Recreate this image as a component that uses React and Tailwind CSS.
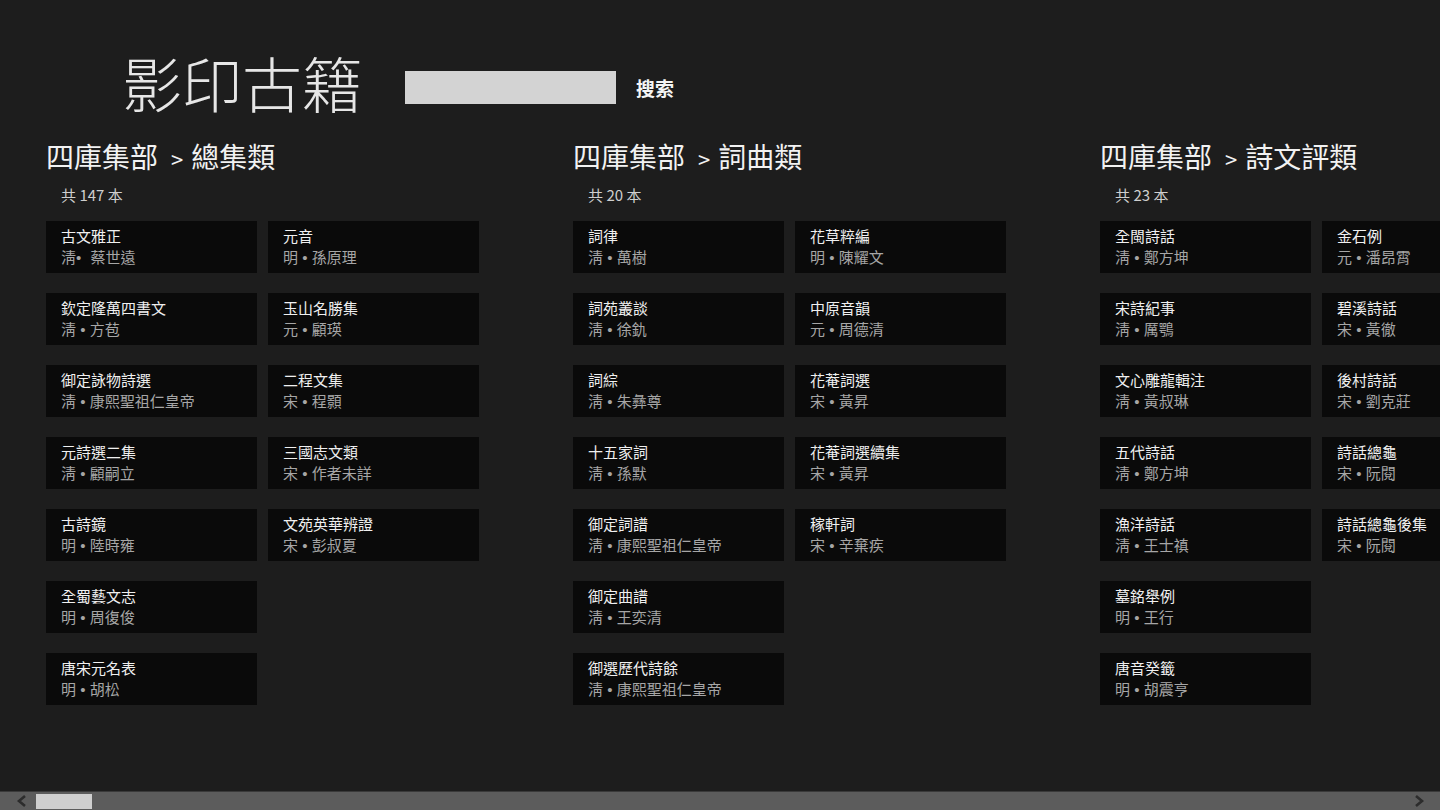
import React from 'react';

const FONT = { fontFamily: '"Noto Sans CJK TC", "Noto Sans", sans-serif' };

const groups = [
  {
    name: '總集類',
    count: 147,
    books: [
      ['古文雅正', '淸• 蔡世遠'],
      ['欽定隆萬四書文', '淸 • 方苞'],
      ['御定詠物詩選', '淸 • 康熙聖祖仁皇帝'],
      ['元詩選二集', '淸 • 顧嗣立'],
      ['古詩鏡', '明 • 陸時雍'],
      ['全蜀藝文志', '明 • 周復俊'],
      ['唐宋元名表', '明 • 胡松'],
      ['元音', '明 • 孫原理'],
      ['玉山名勝集', '元 • 顧瑛'],
      ['二程文集', '宋 • 程顥'],
      ['三國志文類', '宋 • 作者未詳'],
      ['文苑英華辨證', '宋 • 彭叔夏'],
    ],
  },
  {
    name: '詞曲類',
    count: 20,
    books: [
      ['詞律', '淸 • 萬樹'],
      ['詞苑叢談', '淸 • 徐釚'],
      ['詞綜', '淸 • 朱彝尊'],
      ['十五家詞', '淸 • 孫默'],
      ['御定詞譜', '淸 • 康熙聖祖仁皇帝'],
      ['御定曲譜', '淸 • 王奕清'],
      ['御選歷代詩餘', '淸 • 康熙聖祖仁皇帝'],
      ['花草粹編', '明 • 陳耀文'],
      ['中原音韻', '元 • 周德清'],
      ['花菴詞選', '宋 • 黃昇'],
      ['花菴詞選續集', '宋 • 黃昇'],
      ['稼軒詞', '宋 • 辛棄疾'],
    ],
  },
  {
    name: '詩文評類',
    count: 23,
    books: [
      ['全閩詩話', '淸 • 鄭方坤'],
      ['宋詩紀事', '淸 • 厲鶚'],
      ['文心雕龍輯注', '淸 • 黃叔琳'],
      ['五代詩話', '淸 • 鄭方坤'],
      ['漁洋詩話', '淸 • 王士禛'],
      ['墓銘舉例', '明 • 王行'],
      ['唐音癸籤', '明 • 胡震亨'],
      ['金石例', '元 • 潘昂霄'],
      ['碧溪詩話', '宋 • 黃徹'],
      ['後村詩話', '宋 • 劉克莊'],
      ['詩話總龜', '宋 • 阮閱'],
      ['詩話總龜後集', '宋 • 阮閱'],
    ],
  },
];

// the bullet and its spaces are set in a latin face so they stay narrow
function Author({ text }) {
  const [before, after] = text.split('•');
  return (
    <>
      {before.trim()}
      <span style={{ fontFamily: '"Liberation Sans", sans-serif' }}>
        {before.endsWith(' ') ? ' ' : ''}•{after.startsWith(' ') ? ' ' : ''}
      </span>
      {before.endsWith(' ') ? null : <span className="inline-block w-[5px]" />}
      {after.trim()}
    </>
  );
}

function BookTile({ title, author }) {
  return (
    <div className="bg-[#0a0a0a] pl-[15px] pt-[5px] h-[52px] overflow-hidden whitespace-pre">
      <div className="text-[15px] leading-[20px] text-[#f0f0f0]">{title}</div>
      <div className="text-[15px] leading-[22px] text-[#a6a6a6]">
        <Author text={author} />
      </div>
    </div>
  );
}

function Group({ name, count, books }) {
  return (
    <section className="w-[527px] shrink-0">
      <h2 className="flex items-baseline text-[28px] leading-[28px] text-[#f2f2f2] font-normal whitespace-nowrap">
        <span>四庫集部</span>
        <span className="ml-[13px] mr-[8px] text-[22px]">&gt;</span>
        <span>{name}</span>
      </h2>
      <div className="mt-[13px] pl-[15px] text-[15px] leading-[20px] text-[#cfcfcf]">
        共 {count} 本
      </div>
      <div className="mt-[16px] grid grid-flow-col grid-rows-[repeat(7,52px)] grid-cols-[211px_211px] gap-x-[11px] gap-y-[20px]">
        {books.map(([t, a]) => (
          <BookTile key={t} title={t} author={a} />
        ))}
      </div>
    </section>
  );
}

function ScrollBar() {
  return (
    <div className="h-[19px] shrink-0 bg-[#5c5c5c] border-t border-[#3a3a3a] flex items-center">
      <svg width="36" height="18" viewBox="0 0 36 18" className="shrink-0">
        <path d="M25 4 L19 9 L25 14" fill="none" stroke="#2c2c2c" strokeWidth="2.6" />
      </svg>
      <div className="w-[56px] h-[15px] bg-[#cfcfcf]" />
      <div className="flex-1" />
      <svg width="36" height="18" viewBox="0 0 36 18" className="shrink-0">
        <path d="M12 4 L18 9 L12 14" fill="none" stroke="#2c2c2c" strokeWidth="2.6" />
      </svg>
    </div>
  );
}

export default function App() {
  return (
    <div className="w-[1440px] h-[810px] bg-[#1d1d1d] flex flex-col overflow-hidden" style={FONT}>
      <main className="flex-1 overflow-hidden">
        <header className="flex items-start pl-[122px] pt-[52px]">
          <h1 className="text-[60px] leading-[60px] font-light text-[#e6e6e6] whitespace-nowrap">影印古籍</h1>
          <div className="ml-[43px] mt-[19px] w-[211px] h-[33px] bg-[#d3d3d3]" />
          <button className="ml-[20px] mt-[26px] text-[19px] leading-[20px] font-bold text-[#f5f5f5]">搜索</button>
        </header>
        <div className="flex pl-[46px] mt-[30px]">
          {groups.map((g) => (
            <Group key={g.name} {...g} />
          ))}
        </div>
      </main>
      <ScrollBar />
    </div>
  );
}
